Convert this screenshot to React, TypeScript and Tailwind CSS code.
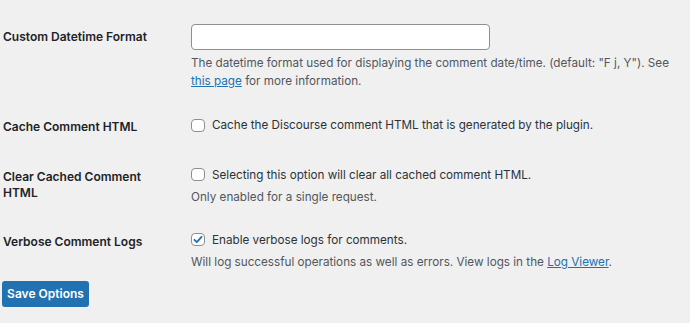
const LABEL = 'w-[188px] shrink-0 text-[12px] leading-[16px] font-semibold text-[#1d2327]'
const TEXT = 'text-[11.7px] leading-[18px] text-[#2c3338]'
const DESC = 'text-[11.7px] leading-[18px] text-[#50575e]'

function Checkbox({ checked }: { checked?: boolean }) {
  return (
    <span className="mr-[7px] flex h-[13px] w-[14px] shrink-0 items-center justify-center rounded-[4px] border border-[#8c8f94] bg-white">
      {checked && (
        <svg viewBox="0 0 20 20" className="h-[13px] w-[13px]">
          <path d="M4 10.5l4 4 8-9" fill="none" stroke="#2271b1" strokeWidth="3" strokeLinecap="round" strokeLinejoin="round" />
        </svg>
      )}
    </span>
  )
}

export default function App() {
  return (
    <div
      className="h-[323px] w-[690px] overflow-hidden bg-[#f0f0f0] pl-[3px] pt-[24px]"
      style={{ fontFamily: 'Inter, "Noto Sans", sans-serif' }}
    >
      {/* datetime format */}
      <div className="flex">
        <div className={`${LABEL} pt-[5px]`}>Custom Datetime Format</div>
        <div>
          <div className="h-[26px] w-[299px] rounded-[4px] border border-[#8c8f94] bg-white" />
          <p className={`${DESC} mt-[4px] whitespace-nowrap`}>
            The datetime format used for displaying the comment date/time. (default: "F j, Y"). See
            <br />
            <a className="text-[#2271b1] underline">this page</a> for more information.
          </p>
        </div>
      </div>

      {/* cache html */}
      <div className="mt-[26px] flex">
        <div className={`${LABEL} pt-[3px]`}>Cache Comment HTML</div>
        <label className={`${TEXT} flex items-start`}>
          <span className="pt-[3px]">
            <Checkbox />
          </span>
          Cache the Discourse comment HTML that is generated by the plugin.
        </label>
      </div>

      {/* clear cache */}
      <div className="mt-[31px] flex">
        <div className={`${LABEL} pt-[3px]`}>
          Clear Cached Comment
          <br />
          HTML
        </div>
        <div>
          <label className={`${TEXT} flex items-start`}>
            <span className="pt-[2px]">
              <Checkbox />
            </span>
            Selecting this option will clear all cached comment HTML.
          </label>
          <p className={`${DESC} mt-[4px]`}>Only enabled for a single request.</p>
        </div>
      </div>

      {/* verbose logs */}
      <div className="mt-[25px] flex">
        <div className={`${LABEL} pt-[3px]`}>Verbose Comment Logs</div>
        <div>
          <label className={`${TEXT} flex items-start`}>
            <span className="pt-[2px]">
              <Checkbox checked />
            </span>
            Enable verbose logs for comments.
          </label>
          <p className={`${DESC} mt-[4px]`}>
            Will log successful operations as well as errors. View logs in the{' '}
            <a className="text-[#2271b1] underline">Log Viewer</a>.
          </p>
        </div>
      </div>

      <button className="-ml-[1px] mt-[10px] block h-[26px] w-[87px] rounded-[3px] bg-[#2271b1] text-[12px] font-semibold text-white">
        Save Options
      </button>
    </div>
  )
}
